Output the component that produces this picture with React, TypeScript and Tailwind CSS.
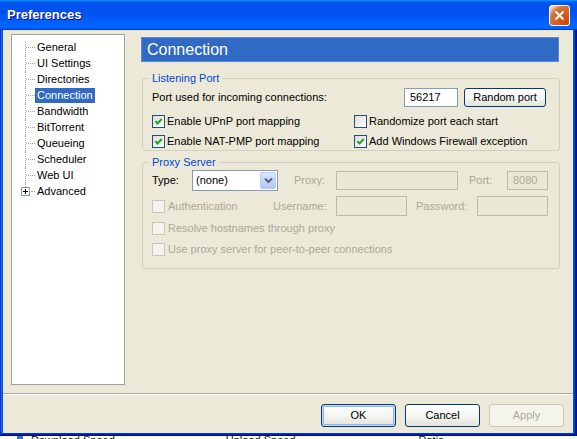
import React from "react";

const treeItems = [
  "General",
  "UI Settings",
  "Directories",
  "Connection",
  "Bandwidth",
  "BitTorrent",
  "Queueing",
  "Scheduler",
  "Web UI",
  "Advanced",
];

function CheckBox({ checked = false, disabled = false }: { checked?: boolean; disabled?: boolean }) {
  return (
    <span
      className={
        disabled
          ? "flex h-[13px] w-[13px] shrink-0 border border-[#CAC8BB] bg-[#F4F3EE]"
          : "flex h-[13px] w-[13px] shrink-0 items-center justify-center border border-[#1C5180] bg-[linear-gradient(135deg,#DCDCD7_0%,#FFFFFF_100%)]"
      }
    >
      {checked && (
        <svg width="11" height="11" viewBox="0 0 11 11">
          <path d="M2.4 5.2 L4.5 7.5 L8.7 3" fill="none" stroke="#21A121" strokeWidth="1.9" />
        </svg>
      )}
    </span>
  );
}

function TreeRow({ label, index }: { label: string; index: number }) {
  const last = index === treeItems.length - 1;
  const selected = label === "Connection";
  return (
    <div className="flex h-[16px] items-center">
      <div className="relative h-full w-[23px] shrink-0">
        {!last && (
          <span
            className={
              index === 0
                ? "absolute bottom-0 left-[13px] top-[3px] border-l border-dotted border-[#A0A0A0]"
                : "absolute bottom-0 left-[13px] top-0 border-l border-dotted border-[#A0A0A0]"
            }
          />
        )}
        {!last && (
          <span className="absolute left-[14px] top-[8px] w-[9px] border-t border-dotted border-[#A0A0A0]" />
        )}
        {last && (
          <>
            <span className="absolute left-[13px] top-0 h-[4px] border-l border-dotted border-[#A0A0A0]" />
            <span className="absolute left-[19px] top-[8px] w-[4px] border-t border-dotted border-[#A0A0A0]" />
            <span className="absolute left-[9px] top-[4px] flex h-[9px] w-[9px] items-center justify-center border border-[#919B9C] bg-white">
              <svg width="7" height="7" viewBox="0 0 7 7">
                <path d="M1 3.5 H6 M3.5 1 V6" stroke="#000" strokeWidth="1" />
              </svg>
            </span>
          </>
        )}
      </div>
      <span
        className={
          selected
            ? "flex h-[15px] items-center bg-[#316AC5] px-[2px] text-white"
            : "flex h-[15px] items-center px-[2px] text-black"
        }
      >
        {label}
      </span>
    </div>
  );
}

export default function App() {
  return (
    <div className="flex h-[439px] w-[577px] flex-col overflow-hidden bg-white font-['Liberation_Sans',Arial,sans-serif] text-[11px] text-black">
      {/* Window */}
      <div className="flex h-[436px] flex-col bg-[#0855DD] shadow-[inset_-1px_-1px_#00138c,inset_1px_1px_#0831d9,inset_-2px_-2px_#001ea0,inset_2px_2px_#166aee,inset_-3px_-3px_#003bda,inset_3px_3px_#0855dd]">
        {/* Title bar */}
        <div className="flex h-[30px] shrink-0 items-center bg-[linear-gradient(180deg,#0997FF_0%,#0053EE_8%,#0050EE_40%,#0066FF_88%,#0066FF_93%,#005BFF_95%,#003DD7_96%,#003DD7_100%)] pl-[7px] pr-[7px]">
          <span className="text-[13px] font-bold text-white [text-shadow:1px_1px_#0F1089]">Preferences</span>
          <span className="ml-auto flex h-[21px] w-[21px] items-center justify-center rounded-[3px] border border-white bg-[radial-gradient(circle_at_90%_90%,#CC4600_0%,#DC6527_55%,#CD7546_70%,#FFCCB2_90%,#FFFFFF_100%)]">
            <svg width="11" height="11" viewBox="0 0 11 11">
              <path d="M1.5 1.5 L9.5 9.5 M9.5 1.5 L1.5 9.5" stroke="#FFFFFF" strokeWidth="2" />
            </svg>
          </span>
        </div>

        {/* Client area */}
        <div className="mb-[3px] ml-[3px] mr-[4px] flex flex-1 flex-col bg-[#ECE9D8]">
          <div className="flex pl-[8px] pt-[4px]">
            {/* Tree */}
            <div className="h-[351px] w-[114px] shrink-0 border border-[#A0A0A0] bg-white pt-[4px]">
              {treeItems.map((t, i) => (
                <TreeRow key={t} label={t} index={i} />
              ))}
            </div>

            {/* Right panel */}
            <div className="ml-[16px] flex w-[419px] flex-col pt-[3px]">
              <div className="flex h-[25px] w-[418px] items-center border border-[#5C8AD8] bg-[#316AC5] pl-[5px] text-[16px] text-white">
                Connection
              </div>

              {/* Listening Port */}
              <fieldset className="ml-[1px] mt-[10px] w-[418px] rounded-[3px] border border-[#D0D0BF]">
                <legend className="ml-[6px] px-[3px] leading-[13px] text-[#0046D5]">Listening Port</legend>
                <div className="pl-[9px] pr-[13px] pt-[3px]">
                  <div className="flex h-[19px] items-center">
                    <span className="flex-1">Port used for incoming connections:</span>
                    <span className="flex h-[19px] w-[54px] items-center border border-[#7F9DB9] bg-white pl-[5px]">56217</span>
                    <span className="ml-[6px] flex h-[19px] w-[82px] items-center justify-center rounded-[3px] border border-[#003C74] bg-[linear-gradient(to_bottom,#FFFFFF_0%,#F4F4F0_55%,#E3E3DB_100%)]">
                      Random port
                    </span>
                  </div>
                  <div className="mt-[5px] flex h-[18px] items-center">
                    <div className="flex w-[202px] items-center gap-[2px]">
                      <CheckBox checked />
                      <span>Enable UPnP port mapping</span>
                    </div>
                    <div className="flex items-center gap-[2px]">
                      <CheckBox />
                      <span>Randomize port each start</span>
                    </div>
                  </div>
                  <div className="mt-[2px] flex h-[18px] items-center">
                    <div className="flex w-[202px] items-center gap-[2px]">
                      <CheckBox checked />
                      <span>Enable NAT-PMP port mapping</span>
                    </div>
                    <div className="flex items-center gap-[2px]">
                      <CheckBox checked />
                      <span>Add Windows Firewall exception</span>
                    </div>
                  </div>
                </div>
              </fieldset>

              {/* Proxy Server */}
              <fieldset className="ml-[1px] mt-[5px] w-[418px] rounded-[3px] border border-[#D0D0BF]">
                <legend className="ml-[6px] px-[3px] leading-[13px] text-[#0046D5]">Proxy Server</legend>
                <div className="pb-[10px] pl-[9px] pr-[11px] pt-[1px]">
                  <div className="flex h-[21px] items-center">
                    <span className="w-[40px] shrink-0">Type:</span>
                    <div className="flex h-[21px] w-[86px] shrink-0 items-center border border-[#7F9DB9] bg-white">
                      <span className="flex-1 pl-[3px]">(none)</span>
                      <span className="mr-[1px] flex h-[17px] w-[16px] items-center justify-center rounded-[2px] border border-[#B9CDF7] bg-[linear-gradient(to_bottom,#DDE7FC_0%,#C2D4FB_50%,#B1C7F6_100%)]">
                        <svg width="9" height="7" viewBox="0 0 9 7">
                          <path d="M1 1.5 L4.5 5 L8 1.5" fill="none" stroke="#4D6185" strokeWidth="2" />
                        </svg>
                      </span>
                    </div>
                    <span className="ml-[16px] w-[42px] shrink-0 text-[#ACA899]">Proxy:</span>
                    <span className="h-[19px] w-[122px] shrink-0 border border-[#BDBAAE] bg-[#EBE8D7]" />
                    <span className="ml-[11px] w-[38px] shrink-0 text-[#ACA899]">Port:</span>
                    <span className="flex h-[19px] w-[41px] shrink-0 items-center border border-[#BDBAAE] bg-[#EBE8D7] pl-[5px] text-[#ACA899]">8080</span>
                  </div>
                  <div className="mt-[5px] flex h-[20px] items-center">
                    <div className="flex w-[121px] shrink-0 items-center gap-[3px]">
                      <CheckBox disabled />
                      <span className="text-[#ACA899]">Authentication</span>
                    </div>
                    <span className="w-[63px] shrink-0 text-[#ACA899]">Username:</span>
                    <span className="h-[20px] w-[71px] shrink-0 border border-[#BDBAAE] bg-[#EBE8D7]" />
                    <span className="ml-[9px] w-[61px] shrink-0 text-[#ACA899]">Password:</span>
                    <span className="h-[20px] w-[71px] shrink-0 border border-[#BDBAAE] bg-[#EBE8D7]" />
                  </div>
                  <div className="mt-[3px] flex h-[18px] items-center gap-[3px]">
                    <CheckBox disabled />
                    <span className="text-[#ACA899]">Resolve hostnames through proxy</span>
                  </div>
                  <div className="mt-[3px] flex h-[18px] items-center gap-[3px]">
                    <CheckBox disabled />
                    <span className="text-[#ACA899]">Use proxy server for peer-to-peer connections</span>
                  </div>
                </div>
              </fieldset>
            </div>
          </div>

          {/* Separator */}
          <div className="mt-[8px] border-t border-b border-t-[#ACA899] border-b-white" />

          {/* Buttons */}
          <div className="mt-[9px] flex justify-end gap-[9px] pr-[9px]">
            <span className="flex h-[23px] w-[75px] items-center justify-center rounded-[3px] border border-[#003C74] bg-[linear-gradient(to_bottom,#FFFFFF_0%,#F4F4F0_55%,#E3E3DB_100%)] shadow-[inset_0_0_0_1px_#C4DAF7,inset_0_0_0_2px_#8FB2EC]">
              OK
            </span>
            <span className="flex h-[23px] w-[75px] items-center justify-center rounded-[3px] border border-[#003C74] bg-[linear-gradient(to_bottom,#FFFFFF_0%,#F4F4F0_55%,#E3E3DB_100%)]">
              Cancel
            </span>
            <span className="flex h-[23px] w-[75px] items-center justify-center rounded-[3px] border border-[#C9C7BA] bg-[#F5F4EA] text-[#ACA899]">
              Apply
            </span>
          </div>
        </div>
      </div>

      {/* Background peeking below the window */}
      <div className="h-[3px] overflow-hidden bg-white">
        <div className="-mt-[1px] flex items-start leading-[11px] text-[#111111]">
          <span className="ml-[17px] mt-[1px] h-[6px] w-[6px] bg-[#3B6FC9]" />
          <span className="ml-[8px]">Download Speed</span>
          <span className="ml-[111px]">Upload Speed</span>
          <span className="ml-[123px]">Ratio</span>
        </div>
      </div>
    </div>
  );
}
